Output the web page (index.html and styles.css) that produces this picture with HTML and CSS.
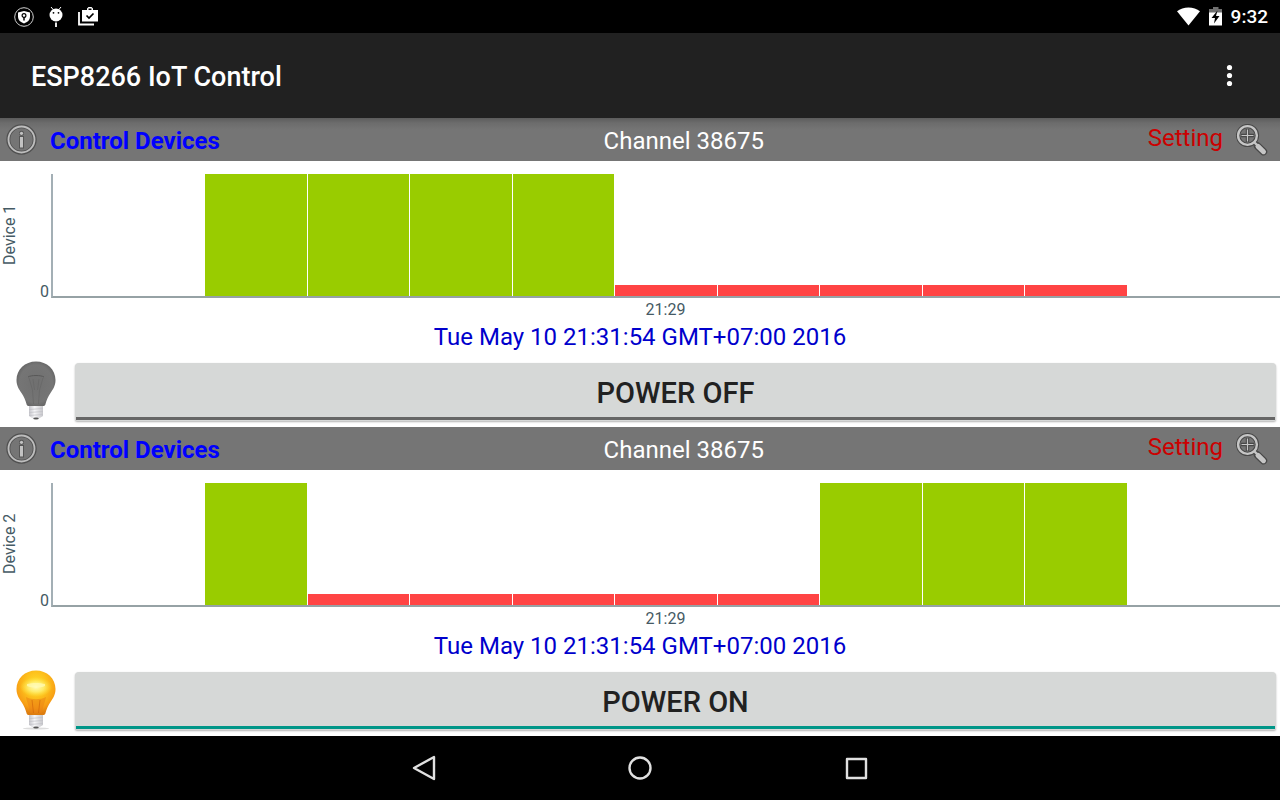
FILE: index.html
```html
<!DOCTYPE html>
<html lang="en">
<head>
  <meta charset="UTF-8" />
  <meta name="viewport" content="width=device-width, initial-scale=1" />
  <title>ESP8266 IoT Control</title>
  <link rel="stylesheet" href="styles.css">
</head>
<body>
  <!-- Shared icons -->
  <svg class="defs" width="0" height="0" aria-hidden="true">
    <defs>
      <linearGradient id="baseMetal" x1="0" x2="1" y1="0" y2="0">
        <stop offset="0" stop-color="#c4c4ca" />
        <stop offset="0.4" stop-color="#f6f6f8" />
        <stop offset="1" stop-color="#c6c6ca" />
      </linearGradient>
      <radialGradient id="glassOn" cx="0.5" cy="0.32" r="0.66">
        <stop offset="0" stop-color="#ffe02e" />
        <stop offset="0.45" stop-color="#fdc01c" />
        <stop offset="0.8" stop-color="#f79c14" />
        <stop offset="1" stop-color="#dd7d10" />
      </radialGradient>
      <radialGradient id="shine">
        <stop offset="0" stop-color="#fffcc0" />
        <stop offset="0.5" stop-color="#fff27a" stop-opacity="0.8" />
        <stop offset="1" stop-color="#ffe640" stop-opacity="0" />
      </radialGradient>
      <radialGradient id="glassOff">
        <stop offset="0" stop-color="#707070" />
        <stop offset="0.85" stop-color="#757575" />
        <stop offset="1" stop-color="#6a6a6a" />
      </radialGradient>
    </defs>
    <symbol id="icon-info" viewBox="0 0 32 32">
      <circle cx="15.500" cy="15.500" r="13.2" fill="none" stroke="#505050" stroke-width="4" />
      <circle cx="15.500" cy="15.500" r="13" fill="none" stroke="#bdbdbd" stroke-width="1.900" />
      <circle cx="15.500" cy="9.300" r="2.500" fill="#555555" />
      <rect x="13" y="12" width="5" height="12.500" fill="#555555" />
      <circle cx="15.500" cy="9.300" r="1.600" fill="#c2c2c2" />
      <rect x="14" y="13" width="3" height="10.500" fill="#c2c2c2" />
    </symbol>
    <symbol id="icon-zoom" viewBox="0 0 32 32">
      <path d="M18 18l3 3" stroke="#484848" stroke-width="5" />
      <path d="M21.500 22l6 5.700" stroke="#484848" stroke-width="7.4" stroke-linecap="round" />
      <circle cx="11.500" cy="11.500" r="9.400" fill="none" stroke="#484848" stroke-width="4.400" />
      <path d="M18 18l4 4" stroke="#c6c6c6" stroke-width="2.400" />
      <path d="M22 22.400l5.500 5.300" stroke="#c6c6c6" stroke-width="5" stroke-linecap="round" />
      <circle cx="11.500" cy="11.500" r="9.400" fill="none" stroke="#c6c6c6" stroke-width="2.400" />
      <path d="M11.500 5v13M5 11.500h13" stroke="#484848" stroke-width="3.400" />
      <path d="M11.500 5.500v12M5.500 11.500h12" stroke="#c6c6c6" stroke-width="1.200" />
    </symbol>
    <symbol id="bulb-base" viewBox="0 0 40 60">
      <path d="M13 43h14v12l-4 2.500h-6L13 55z" fill="url(#baseMetal)" />
      <path d="M13 48.500l14-1M13 51.500l14-1M13 54.500l14-1" stroke="#c0c0c6" stroke-width="0.7" />
      <ellipse cx="20" cy="57.500" rx="2.800" ry="1" fill="#555555" />
    </symbol>
    <symbol id="bulb-off" viewBox="0 0 40 60">
      <use href="#bulb-base" />
      <path d="M20 .5C9 .5 .5 8.500 .5 19c0 6 2.700 9.500 5 13C8 36 9.500 39 10.500 43c.3 1.500 1 2 2.500 2h14c1.500 0 2.200-.5 2.500-2 1-4 2.500-7 5-11 2.300-3.500 5-7 5-13C39.500 8.500 31 .5 20 .5z" fill="url(#glassOff)" />
      <path d="M12 16c3-2 13-2 16 0" fill="none" stroke="#585858" stroke-width="1" />
      <path d="M13 17l3.500 12 1 14M27 17l-3.500 12-1 14M17 18l1.500 11M23 18l-1.500 11" fill="none" stroke="#666666" stroke-width="0.7" />
    </symbol>
    <symbol id="bulb-on" viewBox="0 0 40 60">
      <ellipse cx="20" cy="58.500" rx="13" ry="1" fill="#dddddd" />
      <use href="#bulb-base" />
      <path d="M20 .5C9 .5 .5 8.500 .5 19c0 6 2.700 9.500 5 13C8 36 9.500 39 10.500 43c.3 1.500 1 2 2.500 2h14c1.500 0 2.200-.5 2.500-2 1-4 2.500-7 5-11 2.300-3.500 5-7 5-13C39.500 8.500 31 .5 20 .5z" fill="url(#glassOn)" />
      <path d="M10 27c5 3 15 3 20 0-1 5-3 9-4 16H14c-1-7-3-11-4-16z" fill="#ea7f14" opacity="0.5" />
      <path d="M16 30l1.500 13M24 30l-1.500 13" stroke="#d2690c" stroke-width="0.7" />
      <ellipse cx="20" cy="17" rx="16" ry="10" fill="url(#shine)" />
      <path d="M11 14c5-1.500 13-1.500 18 0v2c-5 2-13 2-18 0z" fill="#fffbb8" opacity="0.7" />
    </symbol>
  </svg>

  <div class="statusBar">
    <svg width="20" height="20" viewBox="0 0 20 20">
      <circle cx="10" cy="10" r="9.300" fill="none" stroke="#d0d0d0" stroke-width="1" />
      <path d="M10 4l6 1.500v4.500c0 3-2.500 5.200-6 6.500-3.500-1.300-6-3.500-6-6.500V5.500z" fill="#ffffff" />
      <circle cx="10" cy="8.500" r="1.900" fill="none" stroke="#000000" stroke-width="1.200" />
      <path d="M10 10v3.500" stroke="#000000" stroke-width="1.500" />
    </svg>
    <svg width="20" height="20" viewBox="0 0 20 20">
      <path d="M5 0l2.500 3M15 0l-2.500 3" stroke="#ffffff" stroke-width="1" />
      <ellipse cx="10" cy="8" rx="6.500" ry="6.500" fill="#ffffff" />
      <circle cx="7.500" cy="5.800" r="0.9" fill="#000000" />
      <circle cx="12.500" cy="5.800" r="0.9" fill="#000000" />
      <path d="M10 15.500v4.500" stroke="#ffffff" stroke-width="1.800" />
    </svg>
    <svg width="20" height="20" viewBox="0 0 20 20">
      <path d="M1 5v12.500h15" fill="none" stroke="#ffffff" stroke-width="1.800" />
      <path d="M4 3h5V1.500L10.500 0h3L15 1.500V3h5v11.500H4zM10.500 3h3V1.500h-3z" fill="#ffffff" fill-rule="evenodd" />
      <path d="M8.500 8.500l2.500 2.500L15.500 6.500" fill="none" stroke="#000000" stroke-width="1.700" />
    </svg>
    <svg class="wifi" width="24" height="20" viewBox="0 0 24 20">
      <path d="M0 4.300C6-.8 17-.8 23 4.300L11.500 18.500z" fill="#ffffff" />
    </svg>
    <svg width="14" height="20" viewBox="0 0 14 20">
      <path d="M4 0h5.500v2H13v5H0V2h4z" fill="#707070" />
      <path d="M0 5.500h13v13H0z" fill="#ffffff" />
      <path d="M8.500 3.500L2.500 11H6l-1 5.500L10.500 9H7z" fill="#000000" />
    </svg>
    <span class="clock">9:32</span>
  </div>

  <header class="appBar">
    <h1>ESP8266 IoT Control</h1>
    <button class="menuBtn" aria-label="More options">
      <svg width="8" height="24" viewBox="0 0 8 24">
        <circle cx="4.500" cy="3.500" r="2.600" fill="#ffffff" />
        <circle cx="4.500" cy="11.500" r="2.600" fill="#ffffff" />
        <circle cx="4.500" cy="19.500" r="2.600" fill="#ffffff" />
      </svg>
    </button>
  </header>

  <main>
    <section class="device">
      <div class="deviceHeader">
        <a class="control" href="#device1"><svg class="icon"><use href="#icon-info" /></svg><span>Control Devices</span></a>
        <span class="channel">Channel 38675</span>
        <button class="setting"><span>Setting</span><svg class="icon"><use href="#icon-zoom" /></svg></button>
      </div>
      <div class="chart" id="device1">
        <div class="yTitle">Device 1</div>
        <div class="yTick">0</div>
        <div class="plot">
          <div class="bar on"></div>
          <div class="bar on"></div>
          <div class="bar on"></div>
          <div class="bar on"></div>
          <div class="bar off"></div>
          <div class="bar off"></div>
          <div class="bar off"></div>
          <div class="bar off"></div>
          <div class="bar off"></div>
        </div>
        <div class="xTick">21:29</div>
      </div>
      <p class="date">Tue May 10 21:31:54 GMT+07:00 2016</p>
      <div class="powerRow">
        <svg class="bulb"><use href="#bulb-off" /></svg>
        <button class="power">POWER OFF</button>
      </div>
    </section>

    <section class="device">
      <div class="deviceHeader">
        <a class="control" href="#device2"><svg class="icon"><use href="#icon-info" /></svg><span>Control Devices</span></a>
        <span class="channel">Channel 38675</span>
        <button class="setting"><span>Setting</span><svg class="icon"><use href="#icon-zoom" /></svg></button>
      </div>
      <div class="chart" id="device2">
        <div class="yTitle">Device 2</div>
        <div class="yTick">0</div>
        <div class="plot">
          <div class="bar on"></div>
          <div class="bar off"></div>
          <div class="bar off"></div>
          <div class="bar off"></div>
          <div class="bar off"></div>
          <div class="bar off"></div>
          <div class="bar on"></div>
          <div class="bar on"></div>
          <div class="bar on"></div>
        </div>
        <div class="xTick">21:29</div>
      </div>
      <p class="date">Tue May 10 21:31:54 GMT+07:00 2016</p>
      <div class="powerRow">
        <svg class="bulb"><use href="#bulb-on" /></svg>
        <button class="power active">POWER ON</button>
      </div>
    </section>
  </main>

  <nav class="navBar">
    <button aria-label="Back">
      <svg width="26" height="26" viewBox="0 0 26 26"><path d="M23 2v22L3 13z" /></svg>
    </button>
    <button aria-label="Home">
      <svg width="26" height="26" viewBox="0 0 26 26"><circle cx="13" cy="13" r="10.500" /></svg>
    </button>
    <button aria-label="Recent apps">
      <svg width="26" height="26" viewBox="0 0 26 26"><rect x="4" y="4" width="19" height="19" /></svg>
    </button>
  </nav>
</body>
</html>
```

FILE: styles.css
```css
* {
  box-sizing: border-box;
}
body {
  font-family: Roboto, "Noto Sans", sans-serif;
  margin: 0;
  min-height: 100vh;
  display: flex;
  flex-direction: column;
  background: #fff;
}
button {
  font-family: inherit;
  border: none;
  background: none;
  padding: 0;
  cursor: pointer;
}
.defs {
  position: absolute;
}
.statusBar {
  display: flex;
  align-items: center;
  gap: 12px;
  height: 33px;
  padding: 0 12px 0 14px;
  background: #000;
  color: #fff;
}
.wifi {
  margin-left: auto;
}
.clock {
  font-size: 19px;
  font-weight: 500;
}
.statusBar .wifi,
.statusBar .wifi + svg {
  margin-right: -4px;
}
.appBar {
  display: flex;
  align-items: center;
  justify-content: space-between;
  height: 85px;
  padding: 0 47px 0 31px;
  background: #212121;
  color: #fff;
}
.appBar h1 {
  margin: 0;
  padding-top: 2px;
  font-size: 27px;
  font-weight: 500;
}
.menuBtn svg {
  display: block;
}
main {
  flex: 1;
}
.deviceHeader {
  display: flex;
  align-items: center;
  height: 43px;
  padding: 0 12px 0 6px;
  background: #757575;
  font-size: 24px;
}
.device:first-child .deviceHeader {
  background: linear-gradient(#5c5c5c, #6c6c6c 5px, #757575 12px);
}
.icon {
  width: 32px;
  height: 32px;
}
.control {
  display: flex;
  align-items: center;
  gap: 12px;
  color: #00f;
  font-weight: 700;
  text-decoration: none;
}
.control span,
.channel {
  padding-top: 2px;
}
.channel {
  flex: 1;
  color: #fff;
  text-align: center;
}
.setting {
  display: flex;
  align-items: flex-start;
  gap: 13px;
  color: #c00;
  font-size: 24px;
}
.chart {
  display: grid;
  grid-template-columns: 20px 31px 1fr;
  grid-template-rows: 124px 24px;
  padding-top: 13px;
  color: #455a64;
  font-size: 16px;
}
.yTitle {
  writing-mode: vertical-rl;
  transform: rotate(180deg);
  padding-top: 2px;
  text-align: center;
}
.yTick {
  align-self: end;
  padding-right: 2px;
  line-height: 12px;
  text-align: right;
}
.plot {
  display: flex;
  align-items: flex-end;
  padding: 0 12.4% 0 12.4%;
  border-left: 2px solid #a3afb5;
  border-bottom: 2px solid #96a2a5;
}
.bar {
  flex: 1;
  border-right: 1px solid #fff;
}
.bar.on {
  height: 100%;
  background: #9c0;
}
.bar.off {
  height: 11px;
  background: #f44;
}
.xTick {
  grid-column: 3;
  line-height: 24px;
  text-align: center;
}
.date {
  margin: 0;
  color: #00c;
  font-size: 24px;
  line-height: 30px;
  text-align: center;
}
.powerRow {
  display: flex;
  align-items: flex-start;
  gap: 19px;
  padding: 9px 4px 6px 16px;
}
.bulb {
  width: 40px;
  height: 60px;
}
.power {
  flex: 1;
  height: 58px;
  margin-top: 2px;
  padding-top: 2px;
  border-radius: 4px 4px 2px 2px;
  background: linear-gradient(#666, #666) 1px 54px / calc(100% - 2px) 3px no-repeat #d6d8d7;
  box-shadow: 0 1px 2px rgba(0, 0, 0, 0.3);
  color: #212121;
  font-size: 29px;
  font-weight: 500;
}
.power.active {
  background-image: linear-gradient(#009688, #009688);
}
.navBar {
  display: flex;
  justify-content: center;
  align-items: center;
  gap: 190px;
  height: 64px;
  background: #000;
}
.navBar svg {
  display: block;
  fill: none;
  stroke: #e0e0e0;
  stroke-width: 2.4;
  stroke-linejoin: round;
}
```
